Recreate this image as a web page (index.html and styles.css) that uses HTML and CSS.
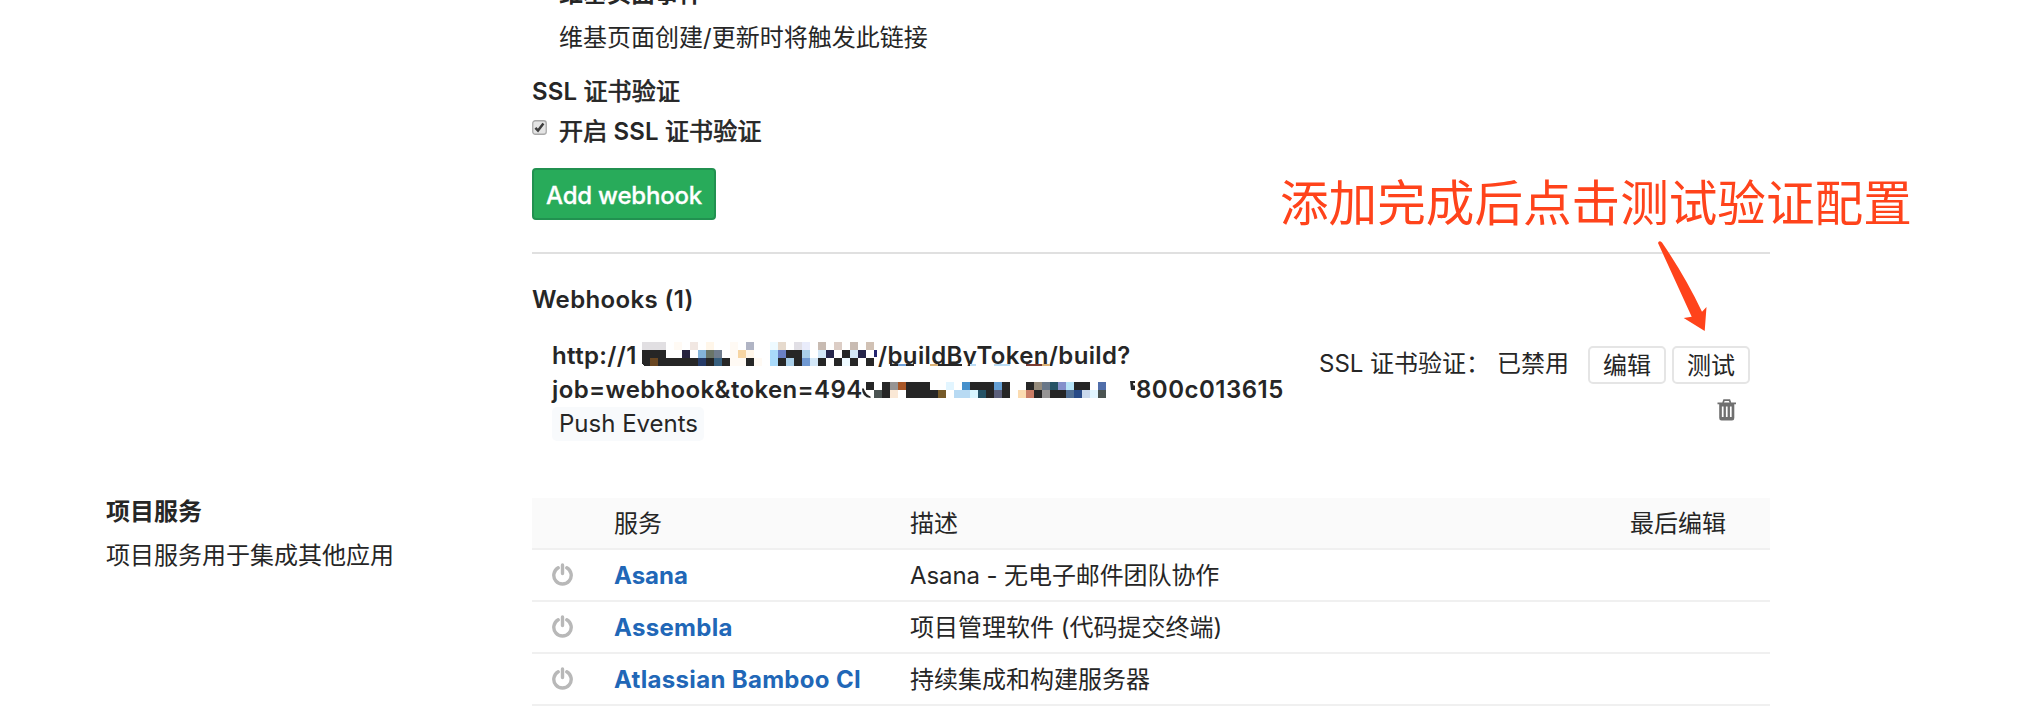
FILE: index.html
```html
<!DOCTYPE html>
<html lang="zh-CN">
<head>
<meta charset="utf-8">
<title>Webhooks</title>
<link rel="stylesheet" href="styles.css">
</head>
<body>
<svg class="sprite" width="0" height="0">
  <symbol id="power" viewBox="0 0 21 23">
    <path d="M6.2 4.8 A8.7 8.7 0 1 0 14.8 4.8 M10.5 2 V10.5" fill="none" stroke="#b8b8b8" stroke-width="3.4" stroke-linecap="round"/>
  </symbol>
</svg>
<main class="page">
  <section class="settings">
    <h4 class="event-name">维基页面事件</h4>
    <p class="event-text">维基页面创建/更新时将触发此链接</p>
    <h4 class="ssl-title">SSL <span class="medium">证书验证</span></h4>
    <label class="ssl-check">
      <svg class="checkbox" width="15" height="16" viewBox="0 0 15 16">
        <rect x="0.75" y="0.75" width="13.5" height="13.5" rx="2.5" fill="#e4e4e4" stroke="#a9a9a9" stroke-width="1.3"/>
        <path d="M3.4 7.8 L6 10.6 L11.4 3.6" fill="none" stroke="#3d3d3d" stroke-width="2.5"/>
      </svg>
      <span><span class="medium">开启</span> SSL <span class="medium">证书验证</span></span>
    </label>
    <button class="add-button">Add webhook</button>
  </section>

  <section class="hooks">
    <h5 class="hooks-title">Webhooks (1)</h5>
    <div class="hook">
      <div class="hook-info">
        <div class="hook-line"><span class="url-host">http://1</span><span>/buildByToken/build?</span></div>
        <div class="hook-line"><span class="url-token">job=webhook&amp;token=494</span><span class="url-tail">800c013615</span></div>
        <span class="tag">Push Events</span>
        <svg class="mosaic" width="600" height="64" viewBox="552 339 600 64" shape-rendering="crispEdges">
          <g transform="translate(642 342) scale(8)" fill="#262626">
            <path fill="#e1dfe2" d="M0 0h3v1h-3z"/>
            <path fill="#fffaf4" d="M4 0h1v1h-1zM11 0h1v2h-1zM11 2h2v1h-2zM14 2h1v1h-1z"/>
            <path fill="#f1e7e2" d="M6 0h1v1h-1z"/>
            <path fill="#fff6e9" d="M8 0h1v1h-1zM13 1h1v1h-1z"/>
            <path fill="#b0b4c4" d="M13 0h1v1h-1z"/>
            <path d="M0 1h3v1h8v1H.6Q0 3 0 2.4zM13 2h1v1h-1z"/>
            <path fill="#26233f" d="M5 1h1v1h-1z"/>
            <path fill="#84b4da" d="M7 1h1v1h-1z"/>
            <path fill="#6a7568" d="M8 1h1v1h-1z"/>
            <path fill="#707d8e" d="M9 1h1v1h-1z"/>
            <path fill="#f7d5a2" d="M12 1h1v1h-1z"/>
            <path fill="#694621" d="M1 2h1v1h-1z"/>
            <path fill="#253b68" d="M7 2h1v1h-1z"/>
            <path fill="#375f7e" d="M9 2h1v1h-1z"/>
            <path fill="#eefaff" d="M16 0h1v1h-1zM25 2h1v1h-1z"/>
            <path fill="#e6dacd" d="M17 0h1v1h-1z"/>
            <path fill="#e1dfe5" d="M19 0h1v1h-1z"/>
            <path fill="#e9ecfb" d="M20 0h1v1h-1z"/>
            <path fill="#c8bbb2" d="M22 0h1v1h-1zM26 0h1v1h-1z"/>
            <path fill="#dccdc5" d="M24 0h1v1h-1z"/>
            <path fill="#d1c1b4" d="M28 0h1v1h-1z"/>
            <path fill="#a9dafa" d="M16 1h1v2h-1z"/>
            <path fill="#6a80c4" d="M17 1h1v1h-1z"/>
            <path d="M18 1h2v2h-1v-1h-1zM17 2h1v1h-1zM22 2h1v1h-1zM24 2h1v1h-1zM25 1h1v1h-1zM26 2h1v1h-1zM28 2h1v1h-1z"/>
            <path fill="#aacfe9" d="M20 1h1v1h-1zM18 2h1v1h-1z"/>
            <path fill="#7099d2" d="M20 2h1v1h-1z"/>
            <path fill="#d3e7f7" d="M21 2h1v1h-1zM22 1h1v1h-1zM26 1h1v1h-1z"/>
            <path fill="#26264b" d="M23 1h1v1h-1zM27 1h1v1h-1z"/>
            <path fill="#232570" d="M29 1h.4v.9h-.4z"/>
          </g>
          <path fill="#fff" d="M890 366h175v8h-175z"/>
          <path fill="#262626" d="M890 364h24v2h-24zM938 364h24v2h-24z"/>
          <path fill="#70a0d8" d="M898 364h8v2h-8z"/>
          <path fill="#dbb277" d="M930 364h8v2h-8zM1042 364h8v2h-8z"/>
          <path fill="#b9dcf5" d="M970 364h6v2h-6zM994 364h16v2h-16z"/>
          <path fill="#7c3c32" d="M1026 364h16v2h-16z"/>
          <g transform="translate(866 382) scale(8)" fill="#262626">
            <path d="M0 0h1v1h-1zM2 0h1v2h-1zM5 0h3v1h1v1h-4zM13 0h3v2h-1v-1h-2zM17 0h1v2h-1zM20 0h1v1h-1zM26 0h2v1h-2zM21 1h1v1h-1zM23 1h2v1h-2z"/>
            <path fill="#969494" d="M3 0h1v1h-1zM22 1h1v1h-1z"/>
            <path fill="#a85728" d="M4 0h1v1h-1z"/>
            <path fill="#e2f5ff" d="M10 0h1v1h-1zM28 1h1v1h-1z"/>
            <path fill="#4790cb" d="M12 0h1v1h-1z"/>
            <path fill="#649fd4" d="M16 0h1v1h-1z"/>
            <path fill="#958b7b" d="M21 0h1v1h-1z"/>
            <path fill="#697788" d="M22 0h1v1h-1z"/>
            <path fill="#265366" d="M23 0h1v1h-1zM14 1h1v1h-1z"/>
            <path fill="#8490cb" d="M24 0h1v1h-1z"/>
            <path fill="#b6e3f7" d="M25 0h1v1h-1z"/>
            <path fill="#506eaa" d="M29 0h1v1h-1z"/>
            <path fill="#4b5452" d="M1 1h1v1h-1zM29 1h1v1h-1z"/>
            <path fill="#fae8d6" d="M3 1h1v1h-1z"/>
            <path fill="#765a29" d="M9 1h1v1h-1z"/>
            <path fill="#b8daf3" d="M11 1h2v1h-2z"/>
            <path fill="#d9f6ff" d="M13 1h1v1h-1z"/>
            <path fill="#5c607c" d="M16 1h1v1h-1z"/>
            <path fill="#fbdbb0" d="M19 1h1v1h-1z"/>
            <path fill="#ca7c65" d="M20 1h1v1h-1z"/>
            <path fill="#506e93" d="M25 1h1v1h-1z"/>
            <path fill="#284a87" d="M26 1h1v1h-1z"/>
            <path fill="#c9d8ec" d="M27 1h1v1h-1z"/>
          </g>
          <g shape-rendering="auto" fill="#262626">
            <path d="M862 388.5h1.8Q865.5 394.5 870.5 396.5V398Q862 397.500 862 388.500Z"/>
            <path d="M1130 381h5v2h-2l.5 2.500h1.500v4.500h-4z"/>
          </g>
        </svg>
      </div>
      <div class="hook-actions">
        <div class="action-row">
          <span class="ssl-state">SSL 证书验证：</span><span class="ssl-value">已禁用</span>
          <button class="small-button">编辑</button><button class="small-button">测试</button>
        </div>
        <svg class="trash" width="20" height="22" viewBox="0 0 20 22">
          <path d="M6 4 L7 1.2 H12.5 L13.5 4" fill="none" stroke="#707070" stroke-width="1.7"/>
          <path d="M0.5 3.4 H19 V5.2 H17.3 V19 Q17.3 21.5 15 21.5 H4.5 Q2.2 21.5 2.2 19 V5.2 H0.5 Z" fill="#707070"/>
          <path d="M5.7 7.5 V18 M9.75 7.5 V18 M13.8 7.5 V18" stroke="#fff" stroke-width="1.7"/>
        </svg>
      </div>
    </div>
  </section>

  <section class="services">
    <div class="services-intro">
      <h4>项目服务</h4>
      <p>项目服务用于集成其他应用</p>
    </div>
    <div class="table">
      <div class="row head"><span></span><span>服务</span><span>描述</span><span>最后编辑</span></div>
      <div class="row"><svg width="21" height="23"><use href="#power"/></svg><a>Asana</a><span class="tight">Asana - 无电子邮件团队协作</span></div>
      <div class="row"><svg width="21" height="23"><use href="#power"/></svg><a class="wide">Assembla</a><span>项目管理软件 (代码提交终端)</span></div>
      <div class="row"><svg width="21" height="23"><use href="#power"/></svg><a class="wide">Atlassian Bamboo CI</a><span>持续集成和构建服务器</span></div>
    </div>
  </section>

  <div class="note">添加完成后点击测试验证配置</div>
  <svg class="arrow" width="60" height="100" viewBox="1655 236 60 100">
    <path d="M1658 243 Q1659 240 1662 242.5 Q1685 276 1702 311.7 L1706.5 307 L1704.7 331 L1683.7 318 L1691.7 316.7 Z" fill="#ff431b"/>
  </svg>
</main>
</body>
</html>
```
FILE: styles.css
```css
* { box-sizing: border-box; margin: 0; padding: 0; }
body { width: 2022px; height: 712px; overflow: hidden; background: #fff; color: #262626; font: 24px/34px Inter, "Noto Sans CJK SC", sans-serif; }
h4, h5 { font-size: 24px; font-weight: 600; }
button { font: inherit; color: inherit; }
.sprite { position: absolute; }
.page { position: relative; width: 2022px; height: 712px; overflow: hidden; }
.settings { height: 252px; padding-left: 532px; display: flex; flex-direction: column; align-items: flex-start; white-space: nowrap; }
.event-name { margin: -23px 0 0 27px; }
.event-text { margin: 10px 0 0 27px; }
.ssl-title { margin-top: 20px; letter-spacing: .15px; }
.ssl-check { display: flex; gap: 12px; margin-top: 6px; font-weight: 600; letter-spacing: .15px; }
.medium { font-weight: 400; -webkit-text-stroke: .7px #262626; }
.checkbox { margin-top: 5px; }
.add-button { width: 184px; height: 52px; margin-top: 19px; padding-top: 3px; border: 2px solid #219150; border-radius: 4px; background: #28ab5a; color: #fff; font-weight: 500; letter-spacing: -.2px; -webkit-text-stroke: .3px #fff; }
.hooks { width: 1238px; height: 246px; margin-left: 532px; border-top: 2px solid #e0e0e0; padding-top: 29px; }
.hooks-title { letter-spacing: .35px; }
.hook { display: flex; margin-top: 22px; padding-left: 20px; }
.hook-info { position: relative; width: 767px; font-weight: 600; letter-spacing: .37px; white-space: nowrap; }
.hook-line { display: flex; }
.url-host { width: 326px; }
.url-token { width: 584px; }
.url-tail { letter-spacing: .5px; }
.mosaic { position: absolute; left: 0; top: 0; }
.tag { display: inline-block; width: 152px; height: 34px; border-radius: 5px; background: #f8fafc; padding-left: 7px; font-weight: 400; letter-spacing: 0; }
.hook-actions { flex: 1; padding-top: 7px; white-space: nowrap; }
.action-row { display: flex; height: 38px; }
.ssl-state { width: 178px; padding-top: 1px; }
.ssl-value { width: 91px; padding-top: 1px; }
.small-button { width: 78px; height: 38px; margin-right: 6px; padding-top: 1px; border: 2px solid #e5e5e5; border-radius: 5px; background: #fff; }
.trash { display: block; margin: 15px 0 0 398px; }
.services { display: flex; }
.services-intro { width: 426px; margin: -3px 0 0 106px; }
.services-intro p { margin-top: 10px; }
.table { width: 1238px; }
.row { display: grid; grid-template-columns: 62px 296px 720px 120px; align-items: center; height: 52px; padding-left: 20px; border-bottom: 2px solid #f0f0f0; white-space: nowrap; }
.row span, .row a { padding-top: 2px; }
.row svg { margin-top: -2px; }
.head { background: #fafafa; }
.row a { color: #2167b7; font-weight: 700; }
.row .wide { letter-spacing: .32px; }
.tight { letter-spacing: -.1px; }
.note { position: absolute; left: 1280px; top: 169px; color: #ff431b; font-size: 48.6px; line-height: 70px; white-space: nowrap; }
.arrow { position: absolute; left: 1655px; top: 236px; }
```
